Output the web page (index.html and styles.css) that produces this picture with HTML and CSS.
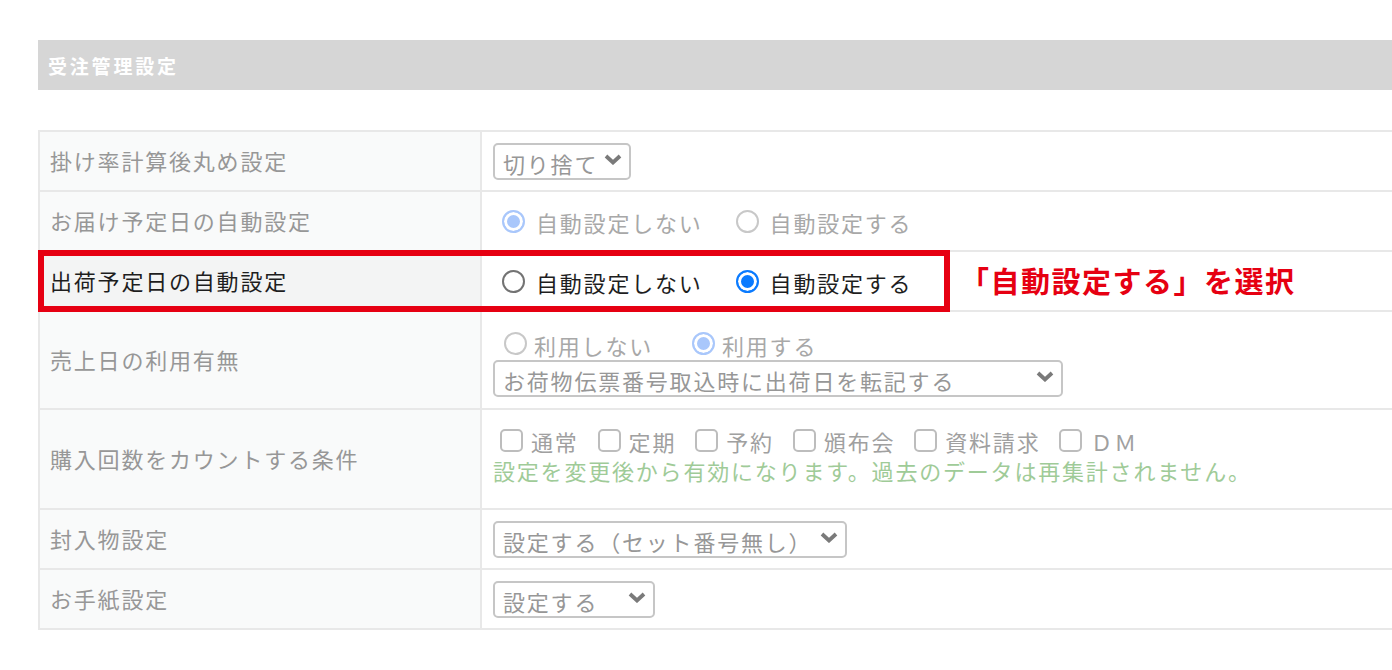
FILE: index.html
```html
<!DOCTYPE html>
<html lang="ja">
<head>
<meta charset="utf-8">
<title>受注管理設定</title>
<link rel="stylesheet" href="styles.css">
</head>
<body>
<div class="page">
  <div class="section-head"><span class="section-title">受注管理設定</span></div>

  <div class="grid-wrap">
    <div class="table">
      <div class="row">
        <div class="label">掛け率計算後丸め設定</div>
        <div class="value">
          <div class="sel w138"><span class="sel-text">切り捨て</span><svg class="chev" viewBox="0 0 18 11" width="18" height="11"><path d="M2 2 L9 8.5 L16 2" /></svg></div>
        </div>
      </div>

      <div class="row">
        <div class="label">お届け予定日の自動設定</div>
        <div class="value">
          <label class="opt dis"><input type="radio" name="r1" checked disabled><span>自動設定しない</span></label>
          <label class="opt dis"><input type="radio" name="r1" disabled><span>自動設定する</span></label>
        </div>
      </div>

      <div class="row hl">
        <div class="label">出荷予定日の自動設定</div>
        <div class="value">
          <label class="opt"><input type="radio" name="r2"><span>自動設定しない</span></label>
          <label class="opt"><input type="radio" name="r2" checked><span>自動設定する</span></label>
        </div>
      </div>

      <div class="row tall">
        <div class="label">売上日の利用有無</div>
        <div class="value stack v4">
          <div class="line">
            <label class="opt dis tight"><input type="radio" name="r3" disabled><span>利用しない</span></label>
            <label class="opt dis tight"><input type="radio" name="r3" checked disabled><span>利用する</span></label>
          </div>
          <div class="sel w570"><span class="sel-text">お荷物伝票番号取込時に出荷日を転記する</span><svg class="chev" viewBox="0 0 18 11" width="18" height="11"><path d="M2 2 L9 8.5 L16 2" /></svg></div>
        </div>
      </div>

      <div class="row tall">
        <div class="label">購入回数をカウントする条件</div>
        <div class="value stack v5">
          <div class="line">
            <label class="chk"><input type="checkbox" disabled><span>通常</span></label>
            <label class="chk"><input type="checkbox" disabled><span>定期</span></label>
            <label class="chk"><input type="checkbox" disabled><span>予約</span></label>
            <label class="chk"><input type="checkbox" disabled><span>頒布会</span></label>
            <label class="chk"><input type="checkbox" disabled><span>資料請求</span></label>
            <label class="chk"><input type="checkbox" disabled><span>ＤＭ</span></label>
          </div>
          <div class="note">設定を変更後から有効になります。過去のデータは再集計されません。</div>
        </div>
      </div>

      <div class="row">
        <div class="label">封入物設定</div>
        <div class="value">
          <div class="sel w354"><span class="sel-text">設定する（セット番号無し）</span><svg class="chev" viewBox="0 0 18 11" width="18" height="11"><path d="M2 2 L9 8.5 L16 2" /></svg></div>
        </div>
      </div>

      <div class="row">
        <div class="label">お手紙設定</div>
        <div class="value">
          <div class="sel w162"><span class="sel-text">設定する</span><svg class="chev" viewBox="0 0 18 11" width="18" height="11"><path d="M2 2 L9 8.5 L16 2" /></svg></div>
        </div>
      </div>
    </div>

    <div class="callout">
      <div class="callout-box"></div>
      <div class="callout-text">「自動設定する」を選択</div>
    </div>
  </div>
</div>
</body>
</html>
```

FILE: styles.css
```css
html, body {
  margin: 0;
  padding: 0;
  background: #ffffff;
  overflow: hidden;
}

body {
  font-family: "Noto Sans CJK JP", "Noto Sans", sans-serif;
  color: #999999;
}

.page {
  padding: 40px 0 0 38px;
}

.section-head {
  height: 50px;
  background: #d6d6d6;
  display: flex;
  align-items: center;
  padding-left: 10px;
}

.section-title {
  color: #ffffff;
  font-weight: 700;
  font-size: 19px;
  letter-spacing: 2.8px;
}

.grid-wrap {
  position: relative;
  margin-top: 40px;
}

.table {
  width: calc(100% + 20px);
  border-top: 2px solid #e8e8e8;
  border-left: 2px solid #e8e8e8;
}

.row {
  display: grid;
  grid-template-columns: 442px 1fr;
  border-bottom: 2px solid #e8e8e8;
  height: 58px;
}

.row.tall {
  height: auto;
}

.label {
  background: #f9fafa;
  border-right: 2px solid #e8e8e8;
  display: flex;
  align-items: center;
  padding-left: 10px;
  padding-bottom: 3px;
  font-size: 22px;
  letter-spacing: 1.8px;
  color: #979797;
}

.row.hl .label {
  background: #f3f4f4;
  color: #1e1e1e;
}

.value {
  background: #ffffff;
  display: flex;
  align-items: center;
  padding-left: 11px;
  font-size: 22px;
  letter-spacing: 1.8px;
}

.value.stack {
  flex-direction: column;
  align-items: flex-start;
  justify-content: flex-start;
}

.value.v4 {
  padding-top: 16px;
  padding-bottom: 11px;
  height: 96px;
  box-sizing: border-box;
}

.value.v5 {
  padding-top: 14px;
  padding-bottom: 20px;
  height: 98px;
  box-sizing: border-box;
}

.line {
  display: flex;
  align-items: center;
  height: 31px;
}

.v5 .line {
  height: 32px;
}

/* radios */
.opt {
  display: inline-flex;
  align-items: center;
  margin-left: 9px;
  margin-right: 24px;
  color: #1e1e1e;
}

.opt span {
  padding-top: 2px;
}

.opt input {
  appearance: none;
  -webkit-appearance: none;
  width: 23px;
  height: 23px;
  border-radius: 50%;
  border: 2px solid #737373;
  background: #ffffff;
  margin: 0 11px 0 0;
  box-sizing: border-box;
  flex: none;
}

.opt input:checked {
  border-color: #0b7bff;
  background: #0b7bff;
  box-shadow: inset 0 0 0 3px #ffffff;
}

.opt.dis {
  color: #a8a8a8;
}

.opt.dis input {
  border-color: #c8c8c8;
}

.opt.dis input:checked {
  border-color: #a9c7fb;
  background: #a9c7fb;
}

.opt.tight {
  margin-left: 11px;
  margin-right: 28px;
}

.opt.tight input {
  margin-right: 7px;
}

/* checkboxes */
.chk {
  display: inline-flex;
  align-items: center;
  margin-left: 7px;
  margin-right: 12px;
  color: #a0a0a0;
}

.chk span {
  padding-top: 2px;
}

.chk input {
  appearance: none;
  -webkit-appearance: none;
  width: 23px;
  height: 23px;
  border: 2px solid #bdbdbd;
  border-radius: 5px;
  background: #ffffff;
  margin: 0 8px 0 0;
  box-sizing: border-box;
  flex: none;
}

.note {
  height: 32px;
  display: flex;
  align-items: center;
  color: #9fcb98;
  letter-spacing: 1.8px;
  margin-top: -2px;
}

/* select */
.sel {
  height: 37px;
  box-sizing: border-box;
  border: 2px solid #c6c6c6;
  border-radius: 5px;
  display: flex;
  align-items: center;
  justify-content: space-between;
  padding: 0 7px 0 8px;
  color: #979797;
  background: #ffffff;
}

.sel-text {
  white-space: nowrap;
  line-height: 1;
  padding-top: 3px;
}

.chev {
  flex: none;
  margin-top: -4px;
}

.chev path {
  fill: none;
  stroke: #7a7a7a;
  stroke-width: 3.8;
  stroke-linejoin: miter;
}

.w138 { width: 138px; }
.w570 { width: 570px; margin-top: 1px; }
.w354 { width: 354px; }
.w162 { width: 162px; }

/* annotation */
.callout {
  position: absolute;
  top: 120px;
  left: 0;
  display: flex;
  align-items: center;
}

.callout-box {
  width: 912px;
  height: 62px;
  box-sizing: border-box;
  border: 6px solid #e60012;
}

.callout-text {
  margin-left: 10px;
  font-size: 29px;
  font-weight: 700;
  letter-spacing: 1.5px;
  color: #e60012;
  white-space: nowrap;
  padding-bottom: 3px;
}
```
